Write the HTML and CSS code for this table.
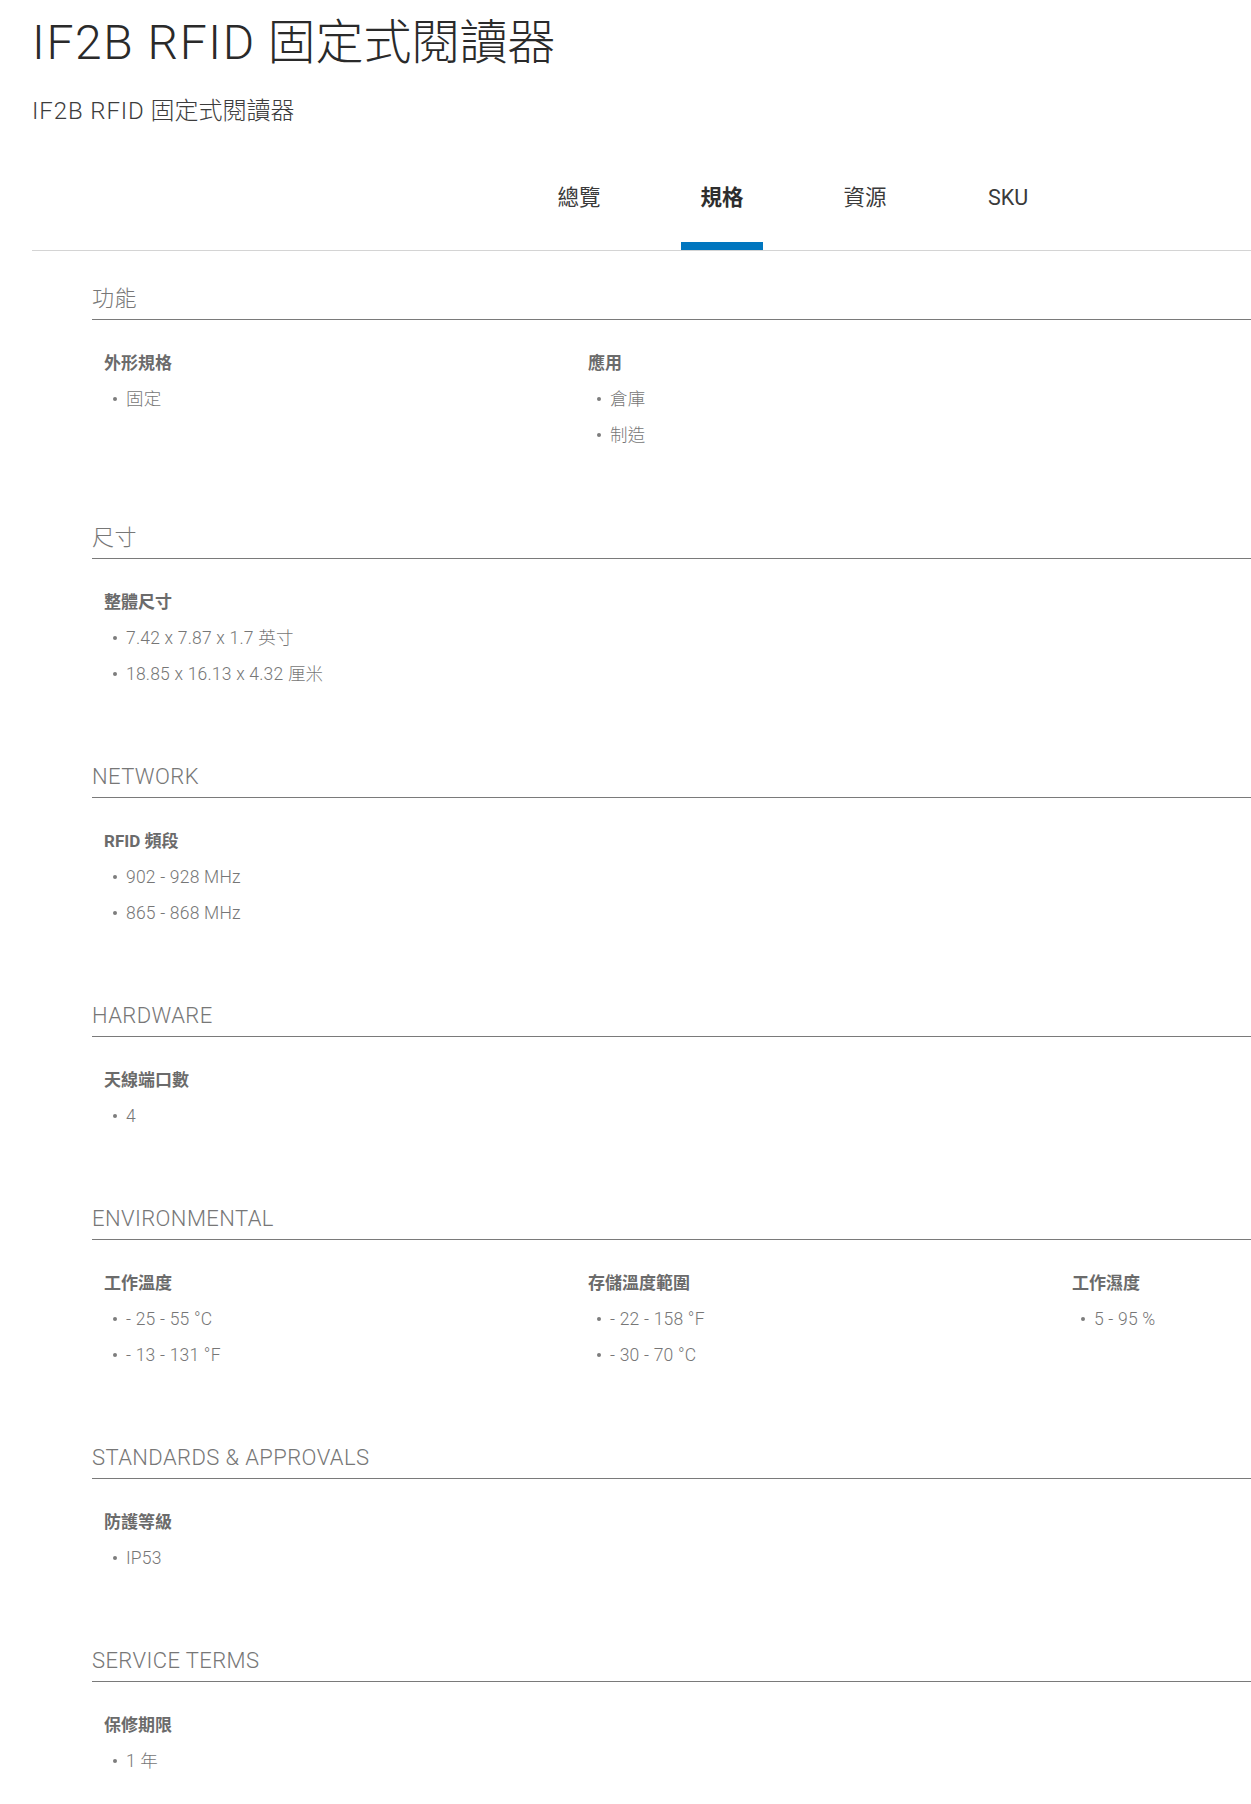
FILE: index.html
```html
<!DOCTYPE html>
<html lang="zh-Hant">
<head>
<meta charset="utf-8">
<title>IF2B RFID 固定式閱讀器</title>
<link rel="stylesheet" href="styles.css">
</head>
<body>
<div class="page">
  <h1 class="title"><span class="latin">IF2B RFID</span> 固定式閱讀器</h1>
  <p class="subtitle"><span class="latin">IF2B RFID</span> 固定式閱讀器</p>

  <nav class="tabs">
    <ul class="tab-list">
      <li class="tab">總覽</li>
      <li class="tab tab-active">規格</li>
      <li class="tab">資源</li>
      <li class="tab">SKU</li>
    </ul>
  </nav>

  <div class="specs">
    <section class="spec-section">
      <h2 class="spec-heading">功能</h2>
      <div class="spec-grid">
        <div class="spec-col">
          <h3 class="spec-label">外形規格</h3>
          <ul class="spec-values"><li>固定</li></ul>
        </div>
        <div class="spec-col">
          <h3 class="spec-label">應用</h3>
          <ul class="spec-values"><li>倉庫</li><li>制造</li></ul>
        </div>
      </div>
    </section>

    <section class="spec-section">
      <h2 class="spec-heading">尺寸</h2>
      <div class="spec-grid">
        <div class="spec-col">
          <h3 class="spec-label">整體尺寸</h3>
          <ul class="spec-values"><li>7.42 x 7.87 x 1.7 英寸</li><li>18.85 x 16.13 x 4.32 厘米</li></ul>
        </div>
      </div>
    </section>

    <section class="spec-section">
      <h2 class="spec-heading">NETWORK</h2>
      <div class="spec-grid">
        <div class="spec-col">
          <h3 class="spec-label">RFID 頻段</h3>
          <ul class="spec-values"><li>902 - 928 MHz</li><li>865 - 868 MHz</li></ul>
        </div>
      </div>
    </section>

    <section class="spec-section">
      <h2 class="spec-heading">HARDWARE</h2>
      <div class="spec-grid">
        <div class="spec-col">
          <h3 class="spec-label">天線端口數</h3>
          <ul class="spec-values"><li>4</li></ul>
        </div>
      </div>
    </section>

    <section class="spec-section">
      <h2 class="spec-heading">ENVIRONMENTAL</h2>
      <div class="spec-grid">
        <div class="spec-col">
          <h3 class="spec-label">工作溫度</h3>
          <ul class="spec-values"><li>- 25 - 55 °C</li><li>- 13 - 131 °F</li></ul>
        </div>
        <div class="spec-col">
          <h3 class="spec-label">存儲溫度範圍</h3>
          <ul class="spec-values"><li>- 22 - 158 °F</li><li>- 30 - 70 °C</li></ul>
        </div>
        <div class="spec-col">
          <h3 class="spec-label">工作濕度</h3>
          <ul class="spec-values"><li>5 - 95 %</li></ul>
        </div>
      </div>
    </section>

    <section class="spec-section">
      <h2 class="spec-heading">STANDARDS &amp; APPROVALS</h2>
      <div class="spec-grid">
        <div class="spec-col">
          <h3 class="spec-label">防護等級</h3>
          <ul class="spec-values"><li>IP53</li></ul>
        </div>
      </div>
    </section>

    <section class="spec-section">
      <h2 class="spec-heading">SERVICE TERMS</h2>
      <div class="spec-grid">
        <div class="spec-col">
          <h3 class="spec-label">保修期限</h3>
          <ul class="spec-values"><li>1 年</li></ul>
        </div>
      </div>
    </section>
  </div>
</div>
</body>
</html>
```

FILE: styles.css
```css
html, body {
  margin: 0;
  padding: 0;
  background: #ffffff;
  overflow-x: hidden;
}

body {
  font-family: "Roboto", "Noto Sans CJK TC", sans-serif;
  color: #333333;
}

.page {
  padding: 13px 0 40px 32px;
}

.title {
  margin: 0;
  font-size: 48px;
  line-height: 60px;
  font-weight: 300;
  color: #2a2a2a;
}

.title .latin {
  letter-spacing: 1.6px;
}

.subtitle {
  margin: 23px 0 0 0;
  font-size: 24px;
  line-height: 30px;
  font-weight: 300;
  color: #3c3c3c;
}

.subtitle .latin {
  letter-spacing: 0.9px;
}

.tabs {
  margin-top: 56px;
  border-bottom: 1px solid #d4d4d4;
}

.tab-list {
  list-style: none;
  margin: 0;
  padding: 0 0 0 506px;
  display: flex;
  gap: 61px;
}

.tab {
  width: 82px;
  text-align: center;
  font-size: 21.5px;
  line-height: 30px;
  padding-bottom: 37px;
  padding-top: 1px;
  color: #3a3a3a;
  font-weight: 400;
}

.tab-active {
  font-weight: 700;
  color: #2e2e2e;
  box-shadow: inset 0 -8px 0 #0076bf;
}

.specs {
  padding-left: 60px;
  margin-top: 33px;
}

.spec-section + .spec-section {
  margin-top: 70px;
}

.spec-heading {
  margin: 0;
  font-size: 22px;
  line-height: 30px;
  font-weight: 300;
  letter-spacing: 0.4px;
  color: #777777;
  padding-bottom: 5px;
  border-bottom: 1px solid #7a7a7a;
}

.spec-grid {
  display: grid;
  grid-template-columns: 484px 484px 1fr;
  padding: 31px 0 0 12px;
}

.spec-label {
  margin: 0;
  font-size: 17px;
  line-height: 24px;
  font-weight: 700;
  color: #6b6b6b;
}

.spec-values {
  list-style: none;
  margin: 6px 0 0 0;
  padding: 0;
}

.spec-values li {
  display: flex;
  align-items: center;
  font-size: 17.5px;
  line-height: 36px;
  font-weight: 300;
  letter-spacing: 0.2px;
  color: #767676;
}

.spec-values li::before {
  content: "";
  width: 4px;
  height: 4px;
  border-radius: 50%;
  background: #7d7d7d;
  margin-left: 9px;
  margin-right: 9px;
  flex: none;
}
```
